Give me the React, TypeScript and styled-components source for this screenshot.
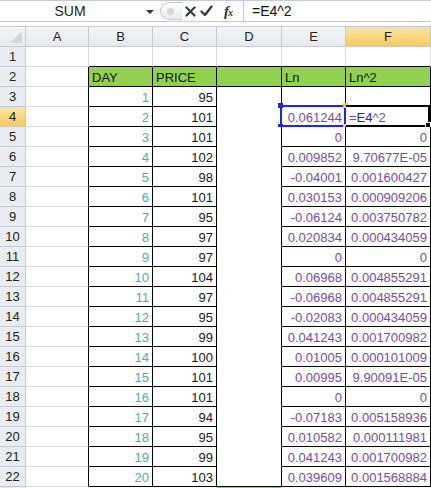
import React from 'react';
import styled, { createGlobalStyle, css } from 'styled-components';

const GlobalStyle = createGlobalStyle`
  html, body {
    margin: 0;
    padding: 0;
    background: #ffffff;
    overflow: hidden;
  }
  body {
    font-family: "Liberation Sans", Arial, sans-serif;
  }
`;

const GRID = '#d9d9d9';
const BLACK = '#000000';
const HEAD_LINE = '#c5cad1';
const GREEN = '#92d050';
const BLUE_TEXT = '#4bacc6';
const PURPLE = '#7a4aa8';

const Page = styled.div`
  width: 431px;
  height: 488px;
  overflow: hidden;
  background: #fff;
`;

const FormulaBar = styled.div`
  display: flex;
  height: 22px;
  box-sizing: border-box;
  border-top: 1px solid ${HEAD_LINE};
  border-bottom: 1px solid ${HEAD_LINE};
  background: #fff;
`;

const NameBox = styled.div`
  position: relative;
  width: 160px;
  display: flex;
  align-items: center;
  justify-content: center;
  font-size: 14px;
  color: #222;
  padding-right: 20px;
  box-sizing: border-box;
`;

const DropArrow = styled.span`
  position: absolute;
  right: 6px;
  top: 9px;
  width: 0;
  height: 0;
  border-left: 4px solid transparent;
  border-right: 4px solid transparent;
  border-top: 4px solid #333;
`;

const Tools = styled.div`
  display: flex;
  align-items: center;
  width: 84px;
  border-right: 1px solid ${HEAD_LINE};
  box-sizing: border-box;
`;

const Pill = styled.div`
  width: 22px;
  height: 18px;
  border: 1px solid #c3c8cf;
  border-right: none;
  border-radius: 10px 0 0 10px;
  background: linear-gradient(#ffffff, #e6e9ed);
  display: flex;
  align-items: center;
  padding-left: 6px;
  box-sizing: border-box;
`;

const Dot = styled.span`
  width: 7px;
  height: 7px;
  border-radius: 50%;
  background: #d4d8dd;
`;

const ToolIcon = styled.span<{ $w: number }>`
  display: flex;
  align-items: center;
  justify-content: center;
  width: ${(p) => p.$w}px;
  height: 20px;
`;

const Fx = styled.span`
  display: flex;
  align-items: center;
  justify-content: center;
  width: 26px;
  font-family: "Liberation Serif", "Times New Roman", serif;
  font-style: italic;
  font-weight: bold;
  font-size: 15px;
  color: #333;
  letter-spacing: -1px;

  small {
    font-size: 10px;
    margin-top: 3px;
  }
`;

const FormulaInput = styled.div`
  flex: 1;
  display: flex;
  align-items: center;
  padding-left: 8px;
  font-size: 14px;
  color: #111;
`;

const Gap = styled.div`
  height: 5px;
  box-sizing: border-box;
  border-bottom: 1px solid ${HEAD_LINE};
`;

const Sheet = styled.div`
  display: grid;
  grid-template-columns: 26px 63px 64px 64px 65px 64px 85px;
  grid-auto-rows: 20px;
`;

const headBase = css<{ $active?: boolean }>`
  box-sizing: border-box;
  display: flex;
  align-items: center;
  justify-content: center;
  font-size: 13px;
  color: #222;
  border-right: 1px solid ${HEAD_LINE};
  border-bottom: 1px solid ${HEAD_LINE};
  background: ${(p) =>
    p.$active ? 'linear-gradient(#fbe3a4, #f6c95f)' : 'linear-gradient(#f3f5f8, #e6e9ee)'};
`;

const ColHead = styled.div<{ $active?: boolean }>`
  ${headBase}
`;

const RowHead = styled.div<{ $active?: boolean }>`
  ${headBase}
  background: ${(p) => (p.$active ? 'linear-gradient(#fbe3a4, #f6c95f)' : '#e9ecf0')};
`;

const Corner = styled.div`
  ${headBase}
  position: relative;

  &::after {
    content: '';
    position: absolute;
    right: 3px;
    bottom: 3px;
    width: 0;
    height: 0;
    border-left: 12px solid transparent;
    border-bottom: 12px solid #d2d6db;
  }
`;

const Cell = styled.div<{
  $align?: 'left' | 'right';
  $color?: string;
  $bg?: string;
  $right: string;
  $bottom: string;
}>`
  position: relative;
  box-sizing: border-box;
  display: flex;
  align-items: center;
  justify-content: ${(p) => (p.$align === 'left' ? 'flex-start' : 'flex-end')};
  padding: 1px 3px 0 3px;
  font-size: 13px;
  white-space: nowrap;
  color: ${(p) => p.$color || '#111'};
  background: ${(p) => p.$bg || '#fff'};
  border-right: 1px solid ${(p) => p.$right};
  border-bottom: 1px solid ${(p) => p.$bottom};
`;

const RefBox = styled.div`
  position: absolute;
  left: -2px;
  top: -2px;
  right: -1px;
  bottom: -1px;
  border: 2px solid #2323e6;
  pointer-events: none;
`;

const Handle = styled.span<{ $c: string; $x: 'l' | 'r'; $y: 't' | 'b' }>`
  position: absolute;
  width: 5px;
  height: 5px;
  background: ${(p) => p.$c};
  ${(p) => (p.$x === 'l' ? 'left: -4px;' : 'right: -4px;')}
  ${(p) => (p.$y === 't' ? 'top: -4px;' : 'bottom: -4px;')}
`;

const EditBox = styled.div`
  position: absolute;
  left: 0;
  top: -2px;
  right: 0;
  bottom: -1px;
  border-top: 2px solid #000;
  border-bottom: 2px solid #000;
  border-right: 2px solid #000;
  pointer-events: none;
`;

const FillHandle = styled.span`
  position: absolute;
  right: -3px;
  bottom: -3px;
  width: 4px;
  height: 4px;
  background: #000;
  border: 1px solid #fff;
`;

const Ref = styled.span`
  color: #2323e6;
`;

const Op = styled.span`
  color: ${PURPLE};
`;

const days = Array.from({ length: 20 }, (_, i) => String(i + 1));
const prices = ['95', '101', '101', '102', '98', '101', '95', '97', '97', '104', '97', '95', '99', '100', '101', '101', '94', '95', '99', '103'];
const ln = ['', '0.061244', '0', '0.009852', '-0.04001', '0.030153', '-0.06124', '0.020834', '0', '0.06968', '-0.06968', '-0.02083', '0.041243', '0.01005', '0.00995', '0', '-0.07183', '0.010582', '0.041243', '0.039609'];
const ln2 = ['', 'EDIT', '0', '9.70677E-05', '0.001600427', '0.000909206', '0.003750782', '0.000434059', '0', '0.004855291', '0.004855291', '0.000434059', '0.001700982', '0.000101009', '9.90091E-05', '0', '0.005158936', '0.000111981', '0.001700982', '0.001568884'];

const colNames = ['A', 'B', 'C', 'D', 'E', 'F'];

function borders(r: number, c: number) {
  const inTable = r >= 2 && r <= 22;
  const right = inTable ? BLACK : GRID;
  let bottom = GRID;
  if (r === 1 && c >= 2) bottom = BLACK;
  if (inTable && c >= 2) bottom = c === 4 && r >= 3 && r <= 21 ? '#fff' : BLACK;
  return { right, bottom };
}

function cellContent(r: number, c: number) {
  if (r === 2) {
    const heads: Record<number, string> = { 2: 'DAY', 3: 'PRICE', 5: 'Ln', 6: 'Ln^2' };
    return { text: heads[c] || '', align: 'left' as const, bg: c >= 2 ? GREEN : undefined, color: '#111' };
  }
  if (r === 23 && c === 4) return { text: '', bg: GREEN };
  if (r >= 3 && r <= 22) {
    const i = r - 3;
    if (c === 2) return { text: days[i], color: BLUE_TEXT };
    if (c === 3) return { text: prices[i], color: '#1a1a1a' };
    if (c === 5) return { text: ln[i], color: PURPLE };
    if (c === 6) return { text: ln2[i], color: PURPLE };
  }
  return { text: '' };
}

export default function App() {
  const rows = Array.from({ length: 23 }, (_, i) => i + 1);

  return (
    <Page>
      <GlobalStyle />
      <FormulaBar>
        <NameBox>
          SUM
          <DropArrow />
        </NameBox>
        <Tools>
          <Pill>
            <Dot />
          </Pill>
          <ToolIcon $w={16}>
            <svg width="11" height="11" viewBox="0 0 11 11">
              <path d="M1.5 1.5 L9.5 9.5 M9.5 1.5 L1.5 9.5" stroke="#3a3a3a" strokeWidth="2.2" strokeLinecap="round" />
            </svg>
          </ToolIcon>
          <ToolIcon $w={17}>
            <svg width="13" height="12" viewBox="0 0 13 12">
              <path d="M1.5 6.5 L5 10 L11.5 1.5" stroke="#3a3a3a" strokeWidth="2.3" fill="none" strokeLinecap="round" strokeLinejoin="round" />
            </svg>
          </ToolIcon>
          <Fx>
            f<small>x</small>
          </Fx>
        </Tools>
        <FormulaInput>=E4^2</FormulaInput>
      </FormulaBar>
      <Gap />
      <Sheet>
        <Corner />
        {colNames.map((n) => (
          <ColHead key={n} $active={n === 'F'}>
            {n}
          </ColHead>
        ))}
        {rows.map((r) => (
          <React.Fragment key={r}>
            <RowHead $active={r === 4}>{r <= 22 ? r : ''}</RowHead>
            {colNames.map((_, idx) => {
              const c = idx + 1;
              const { right, bottom } = borders(r, c);
              const cnt = cellContent(r, c);
              const isEdit = r === 4 && c === 6;
              const isRef = r === 4 && c === 5;
              return (
                <Cell
                  key={c}
                  $right={right}
                  $bottom={bottom}
                  $align={isEdit ? 'left' : cnt.align}
                  $color={cnt.color}
                  $bg={cnt.bg}
                >
                  {isEdit ? (
                    <>
                      <Op>=</Op>
                      <Ref>E4</Ref>
                      <Op>^2</Op>
                      <EditBox>
                        <FillHandle />
                      </EditBox>
                    </>
                  ) : (
                    cnt.text
                  )}
                  {isRef && (
                    <RefBox>
                      <Handle $c="#2323e6" $x="l" $y="t" />
                      <Handle $c="#2323e6" $x="l" $y="b" />
                      <Handle $c="#f2d21a" $x="r" $y="t" />
                      <Handle $c="#f2d21a" $x="r" $y="b" />
                    </RefBox>
                  )}
                </Cell>
              );
            })}
          </React.Fragment>
        ))}
      </Sheet>
    </Page>
  );
}
